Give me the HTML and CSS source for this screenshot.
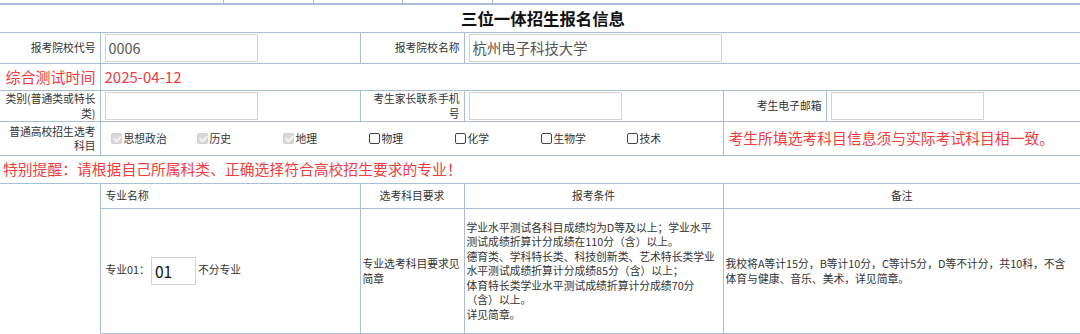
FILE: index.html
```html
<!DOCTYPE html>
<html lang="zh-CN">
<head>
<meta charset="utf-8">
<title>三位一体招生报名信息</title>
<link rel="stylesheet" href="styles.css">
</head>
<body>
<div class="strip"><span class="s1"></span><span class="s2"></span><span class="s3"></span><span class="s4"></span></div>
<table class="form">
  <colgroup><col class="c1"><col class="c2"><col class="c3"><col class="c4"><col class="c5"><col class="c6"></colgroup>
  <tr class="r-title"><td colspan="6" class="title nl nr nt">三位一体招生报名信息</td></tr>
  <tr class="r1">
    <td class="lbl nl">报考院校代号</td>
    <td><input class="inp w153" value="0006"></td>
    <td class="lbl">报考院校名称</td>
    <td colspan="3" class="nr"><input class="inp w253" value="杭州电子科技大学"></td>
  </tr>
  <tr class="r2">
    <td class="lbl red big nl">综合测试时间</td>
    <td colspan="5" class="red big nr">2025-04-12</td>
  </tr>
  <tr class="r3">
    <td class="lbl nl">类别(普通类或特长类)</td>
    <td><input class="inp w153"></td>
    <td class="lbl">考生家长联系手机号</td>
    <td><input class="inp w153"></td>
    <td class="lbl">考生电子邮箱</td>
    <td class="nr"><input class="inp w153"></td>
  </tr>
  <tr class="r4">
    <td class="lbl nl">普通高校招生选考科目</td>
    <td colspan="3">
      <div class="opts">
        <label class="opt"><input type="checkbox" class="cb" checked disabled><span>思想政治</span></label>
        <label class="opt"><input type="checkbox" class="cb" checked disabled><span>历史</span></label>
        <label class="opt"><input type="checkbox" class="cb" checked disabled><span>地理</span></label>
        <label class="opt"><input type="checkbox" class="cb"><span>物理</span></label>
        <label class="opt"><input type="checkbox" class="cb"><span>化学</span></label>
        <label class="opt"><input type="checkbox" class="cb"><span>生物学</span></label>
        <label class="opt"><input type="checkbox" class="cb"><span>技术</span></label>
      </div>
    </td>
    <td colspan="2" class="red warn nr">考生所填选考科目信息须与实际考试科目相一致。</td>
  </tr>
  <tr class="r5"><td colspan="6" class="red notice nl nr">特别提醒：请根据自己所属科类、正确选择符合高校招生要求的专业！</td></tr>
  <tr class="r6h">
    <td rowspan="2" class="blank"></td>
    <td class="hd">专业名称</td>
    <td class="ctr">选考科目要求</td>
    <td class="ctr">报考条件</td>
    <td colspan="2" class="ctr nr">备注</td>
  </tr>
  <tr class="r6">
    <td class="major">专业01：<input class="inp code" value="01"><span class="mname">不分专业</span></td>
    <td class="txt">专业选考科目要求见<br>简章</td>
    <td class="txt nw">学业水平测试各科目成绩均为D等及以上；学业水平<br>测试成绩折算计分成绩在110分（含）以上。<br>德育类、学科特长类、科技创新类、艺术特长类学业<br>水平测试成绩折算计分成绩85分（含）以上；<br>体育特长类学业水平测试成绩折算计分成绩70分<br>（含）以上。<br>详见简章。</td>
    <td colspan="2" class="txt nw nr">我校将A等计15分，B等计10分，C等计5分，D等不计分，共10科，不含<br>体育与健康、音乐、美术，详见简章。</td>
  </tr>
</table>
</body>
</html>
```

FILE: styles.css
```css
html, body {
  margin: 0;
  padding: 0;
  background: #fff;
}
body {
  width: 1080px;
  overflow: hidden;
  font-family: "Noto Sans CJK SC", "Microsoft YaHei", sans-serif;
  color: #333;
}
.strip {
  display: flex;
  height: 3px;
  border-bottom: 2px solid #a8bfdc;
}
.strip span { border-right: 1px solid #a8bfdc; }
.s1 { width: 223px; }
.s2 { width: 89px; }
.s3 { width: 88px; }
.s4 { width: 89px; }

.form {
  width: 1080px;
  border-collapse: collapse;
  table-layout: fixed;
}
.c1 { width: 100px; }
.c2 { width: 260px; }
.c3 { width: 104px; }
.c4 { width: 259px; }
.c5 { width: 103px; }
.c6 { width: 254px; }

.form td {
  border: 1px solid #a8bfdc;
  padding: 0 4px;
  font-size: 10.8px;
  line-height: 14.5px;
  vertical-align: middle;
  color: #333;
}
.form td.nl { border-left: none; }
.form td.nr { border-right: none; }
.form td.nt { border-top: none; }

.r-title { height: 27px; }
.r1 { height: 31px; }
.r2 { height: 27px; }
.r3 { height: 31px; }
.r4 { height: 34px; }
.r5 { height: 28px; }
.r6h { height: 25px; }
.r6 { height: 125px; }

.title {
  text-align: center;
  font-size: 16.4px !important;
  font-weight: bold;
  color: #111 !important;
  padding-left: 10px !important;
}
.lbl { text-align: right; }
.red { color: #f03e3e !important; }
.big { font-size: 15px !important; line-height: 18px !important; }
.warn { font-size: 14.8px !important; padding-left: 5px !important; }
.notice { font-size: 14.8px !important; padding-left: 3px !important; }

.inp {
  box-sizing: border-box;
  height: 28px;
  margin: 0;
  padding: 0 3px;
  border: 1px solid #d4d4d4;
  font-family: "Noto Sans CJK SC", sans-serif;
  font-size: 14.4px;
  color: #555;
  background: #fff;
  vertical-align: middle;
  outline: none;
}
.w153 { width: 153px; }
.w253 { width: 253px; }

.opts {
  display: flex;
  padding-left: 6px;
}
.opt {
  display: flex;
  align-items: center;
  gap: 2px;
  width: 86px;
  flex: none;
  font-size: 10.8px;
  color: #333;
}
.cb {
  appearance: none;
  -webkit-appearance: none;
  position: relative;
  box-sizing: border-box;
  width: 11px;
  height: 11px;
  margin: 0;
  border: 1px solid #444;
  border-radius: 2px;
  background: #fff;
  flex: none;
}
.cb:checked {
  background: #d9d9d9;
  border-color: #d0d0d0;
}
.cb:checked::after {
  content: "";
  position: absolute;
  left: 3px;
  top: 0;
  width: 3px;
  height: 6px;
  border: solid #f4f4f4;
  border-width: 0 2px 2px 0;
  transform: rotate(45deg);
}

.blank {
  border-top: 1px solid #a8bfdc;
  border-left: none !important;
  border-bottom: none !important;
}
.hd { padding-left: 5px !important; }
.ctr { text-align: center; }
.major { padding-left: 5px !important; }
.code {
  width: 45px;
  color: #111;
  font-size: 15.5px;
  margin: 0 2px 0 1px;
}
.txt { padding: 0 2px !important; }
.nw { white-space: nowrap; }
```
